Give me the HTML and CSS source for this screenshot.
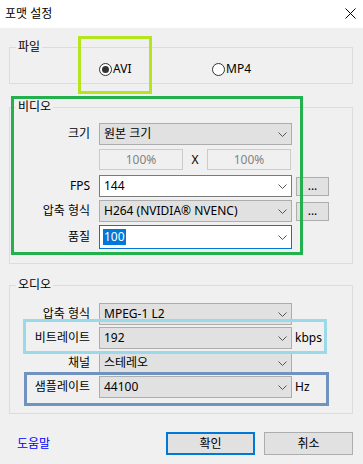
FILE: index.html
```html
<!DOCTYPE html>
<html lang="ko">
<head>
<meta charset="utf-8">
<title>포맷 설정</title>
<link rel="stylesheet" href="styles.css">
</head>
<body>
<div class="window">
  <div class="titlebar">
    <span class="title">포맷 설정</span>
    <svg class="close" width="11" height="11" viewBox="0 0 11 11"><path d="M0.5 0.5 L10.5 10.5 M10.5 0.5 L0.5 10.5" stroke="#000" stroke-width="1" fill="none"/></svg>
  </div>

  <fieldset class="group group-file">
    <legend>파일</legend>
    <div class="radio-row">
      <label class="radio radio-avi"><span class="radio-circle checked"></span>AVI</label>
      <label class="radio"><span class="radio-circle"></span>MP4</label>
    </div>
  </fieldset>

  <fieldset class="group group-video">
    <legend>비디오</legend>
    <div class="row row-size">
      <span class="lbl">크기</span>
      <div class="combo gray"><span>원본 크기</span><svg class="chev" width="9" height="5" viewBox="0 0 9 5"><path d="M0.5 0.5 L4.5 4.5 L8.5 0.5" stroke="#555" fill="none"/></svg></div>
    </div>
    <div class="row row-pct">
      <span class="lbl"></span>
      <div class="pct">100%</div>
      <span class="times">X</span>
      <div class="pct">100%</div>
    </div>
    <div class="row row-fps">
      <span class="lbl">FPS</span>
      <div class="combo white"><span>144</span><svg class="chev" width="9" height="5" viewBox="0 0 9 5"><path d="M0.5 0.5 L4.5 4.5 L8.5 0.5" stroke="#555" fill="none"/></svg></div>
      <div class="dots">...</div>
    </div>
    <div class="row row-codec">
      <span class="lbl">압축 형식</span>
      <div class="combo gray"><span>H264 (NVIDIA® NVENC)</span><svg class="chev" width="9" height="5" viewBox="0 0 9 5"><path d="M0.5 0.5 L4.5 4.5 L8.5 0.5" stroke="#555" fill="none"/></svg></div>
      <div class="dots">...</div>
    </div>
    <div class="row row-quality">
      <span class="lbl">품질</span>
      <div class="combo white focused"><span class="sel">100</span><svg class="chev" width="9" height="5" viewBox="0 0 9 5"><path d="M0.5 0.5 L4.5 4.5 L8.5 0.5" stroke="#555" fill="none"/></svg></div>
    </div>
  </fieldset>

  <fieldset class="group group-audio">
    <legend>오디오</legend>
    <div class="row row-acodec">
      <span class="lbl">압축 형식</span>
      <div class="combo gray"><span>MPEG-1 L2</span><svg class="chev" width="9" height="5" viewBox="0 0 9 5"><path d="M0.5 0.5 L4.5 4.5 L8.5 0.5" stroke="#555" fill="none"/></svg></div>
    </div>
    <div class="row row-bitrate">
      <span class="lbl">비트레이트</span>
      <div class="combo gray"><span>192</span><svg class="chev" width="9" height="5" viewBox="0 0 9 5"><path d="M0.5 0.5 L4.5 4.5 L8.5 0.5" stroke="#555" fill="none"/></svg></div>
      <span class="unit">kbps</span>
    </div>
    <div class="row row-channel">
      <span class="lbl">채널</span>
      <div class="combo gray"><span>스테레오</span><svg class="chev" width="9" height="5" viewBox="0 0 9 5"><path d="M0.5 0.5 L4.5 4.5 L8.5 0.5" stroke="#555" fill="none"/></svg></div>
    </div>
    <div class="row row-rate">
      <span class="lbl">샘플레이트</span>
      <div class="combo gray"><span>44100</span><svg class="chev" width="9" height="5" viewBox="0 0 9 5"><path d="M0.5 0.5 L4.5 4.5 L8.5 0.5" stroke="#555" fill="none"/></svg></div>
      <span class="unit">Hz</span>
    </div>
  </fieldset>

  <div class="footer">
    <a class="help">도움말</a>
    <div class="btn primary">확인</div>
    <div class="btn">취소</div>
  </div>

  <div class="mark mark-lime"></div>
  <div class="mark mark-green"></div>
  <div class="mark mark-sky"></div>
  <div class="mark mark-steel"></div>
</div>
</body>
</html>
```

FILE: styles.css
```css
* { box-sizing: border-box; }

body {
  margin: 0;
  background: #f0f0f0;
  font-family: "Noto Sans", "Noto Sans CJK KR", sans-serif;
  font-size: 12px;
  color: #000;
}

.window {
  position: relative;
  width: 363px;
  height: 464px;
  background: #f0f0f0;
  overflow: hidden;
}

.titlebar {
  height: 28px;
  background: #fff;
  display: flex;
  align-items: center;
  justify-content: space-between;
  padding: 0 7px 0 5px;
  line-height: 16px;
}

.close { display: block; margin-top: -2px; }

.group {
  margin: 0 10px 0 9px;
  padding: 0;
  border: 1px solid #dcdcdc;
  min-width: 0;
}

.group legend {
  margin-left: 6px;
  padding: 0 2px;
  height: 16px;
  line-height: 16px;
}

.group-file { margin-top: 11px; }
.group-video { margin-top: 15px; padding-bottom: 14px; }
.group-audio { margin-top: 13px; padding-bottom: 15px; }

.radio-row {
  height: 28px;
  display: flex;
  align-items: center;
  padding-left: 89px;
}

.radio {
  display: flex;
  align-items: center;
  gap: 1px;
  line-height: 16px;
}

.radio-avi { width: 113px; }

.radio-circle {
  width: 13px;
  height: 13px;
  border: 1px solid #333;
  border-radius: 50%;
  background: #fff;
  display: flex;
  align-items: center;
  justify-content: center;
}

.radio-circle.checked::after {
  content: "";
  width: 7px;
  height: 7px;
  border-radius: 50%;
  background: #333;
}

.row {
  display: flex;
  align-items: center;
  line-height: 16px;
}

.lbl {
  width: 80px;
  margin-right: 9px;
  text-align: right;
  white-space: nowrap;
}

.combo {
  width: 193px;
  height: 22px;
  border: 1px solid #adadad;
  display: flex;
  align-items: center;
  justify-content: space-between;
  padding: 0 4px;
  white-space: nowrap;
}

.combo.gray { background: #e1e1e1; }
.combo.white { background: #fff; border-color: #7a7a7a; }
.combo.focused { border-color: #0078d7; height: 24px; padding-left: 3px; }

.chev { display: block; flex: none; }

.sel {
  background: #0078d7;
  color: #fff;
  padding: 0 1px;
}

.pct {
  width: 84px;
  height: 21px;
  border: 1px solid #cccccc;
  background: #f0f0f0;
  color: #838383;
  text-align: center;
  line-height: 19px;
}

.times {
  width: 24px;
  text-align: center;
}

.dots {
  width: 33px;
  height: 19px;
  margin-left: 4px;
  border: 1px solid #adadad;
  background: #e1e1e1;
  text-align: center;
  line-height: 15px;
}

.unit { margin-left: 3px; }

.row-size { margin-top: 8px; }
.row-pct { margin-top: 4px; }
.row-fps { margin-top: 5px; }
.row-codec { margin-top: 3px; }
.row-quality { margin-top: 3px; }

.row-acodec { margin-top: 10px; }
.row-bitrate { margin-top: 2px; }
.row-channel { margin-top: 3px; }
.row-rate { margin-top: 2px; }

.footer {
  margin-top: 18px;
  height: 23px;
  display: flex;
  align-items: center;
  padding: 0 10px 0 17px;
  gap: 9px;
  line-height: 16px;
}

.help {
  flex: 1;
  color: #0000ff;
}

.btn {
  width: 89px;
  height: 23px;
  border: 1px solid #adadad;
  background: #e1e1e1;
  display: flex;
  align-items: center;
  justify-content: center;
}

.btn.primary { border: 2px solid #0078d7; }

.mark {
  position: absolute;
  border: 3px solid;
  pointer-events: none;
}

.mark-lime { left: 78px; top: 36px; width: 74px; height: 58px; border-color: #b5e61d; }
.mark-green { left: 11px; top: 96px; width: 292px; height: 159px; border-color: #22b14c; }
.mark-sky { left: 23px; top: 319px; width: 304px; height: 35px; border-color: #99d9ea; }
.mark-steel { left: 24px; top: 372px; width: 305px; height: 34px; border-color: #7092be; }
```
